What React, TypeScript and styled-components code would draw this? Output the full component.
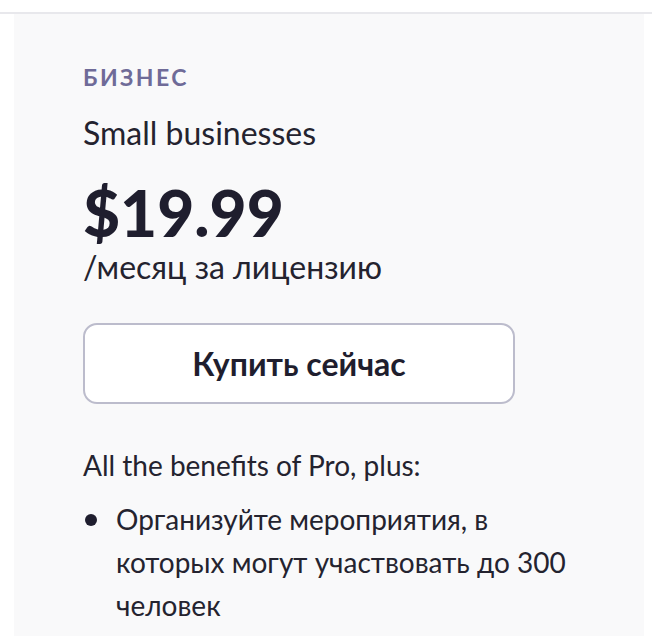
import React from "react";
import styled, { createGlobalStyle } from "styled-components";

const Global = createGlobalStyle`
  html, body { margin: 0; padding: 0; background: #ffffff; }
  body { font-family: Lato, "Noto Sans", sans-serif; color: #22212f; }
`;

const Page = styled.div`
  padding-top: 12px;
  height: 636px;
  box-sizing: border-box;
  overflow: hidden;
`;

const Divider = styled.div`
  border-top: 2px solid #e8e8ec;
`;

const Panel = styled.section`
  margin: 0 8px 0 14px;
  background: #f9f9fa;
  padding: 50px 0 0 69px;
  height: 700px;
  box-sizing: border-box;
  display: flex;
  flex-direction: column;
`;

const Tier = styled.div`
  font-size: 23px;
  font-weight: 700;
  letter-spacing: 2.4px;
  color: #6f6b98;
  line-height: 26px;
`;

const Audience = styled.div`
  margin-top: 24px;
  font-size: 32px;
  line-height: 38px;
  color: #24232f;
`;

const Price = styled.div`
  margin-top: 25px;
  font-size: 64px;
  font-weight: 900;
  line-height: 72px;
  color: #1f1e2e;
`;

const Period = styled.div`
  font-size: 32px;
  line-height: 36px;
  color: #24232f;
`;

const BuyButton = styled.button`
  margin-top: 38px;
  width: 432px;
  height: 81px;
  border: 2px solid #bcbccc;
  border-radius: 14px;
  background: #ffffff;
  font-family: inherit;
  font-size: 32px;
  font-weight: 700;
  color: #1f1e2e;
  cursor: pointer;
`;

const Intro = styled.div`
  margin-top: 44px;
  font-size: 28px;
  line-height: 34px;
  color: #24232f;
`;

const List = styled.ul`
  margin: 16px 0 0 0;
  padding: 0;
  list-style: none;
  width: 500px;
`;

const Item = styled.li`
  position: relative;
  padding-left: 33px;
  font-size: 28px;
  line-height: 43px;
  color: #24232f;
  &::before {
    content: "";
    position: absolute;
    left: 2px;
    top: 16px;
    width: 12px;
    height: 12px;
    border-radius: 50%;
    background: #1f1e2e;
  }
`;

export default function App() {
  return (
    <>
      <Global />
      <Page>
        <Divider />
        <Panel>
          <Tier>БИЗНЕС</Tier>
          <Audience>Small businesses</Audience>
          <Price>$19.99</Price>
          <Period>/месяц за лицензию</Period>
          <BuyButton>Купить сейчас</BuyButton>
          <Intro>All the benefits of Pro, plus:</Intro>
          <List>
            <Item>Организуйте мероприятия, в которых могут участвовать до 300 человек</Item>
          </List>
        </Panel>
      </Page>
    </>
  );
}
